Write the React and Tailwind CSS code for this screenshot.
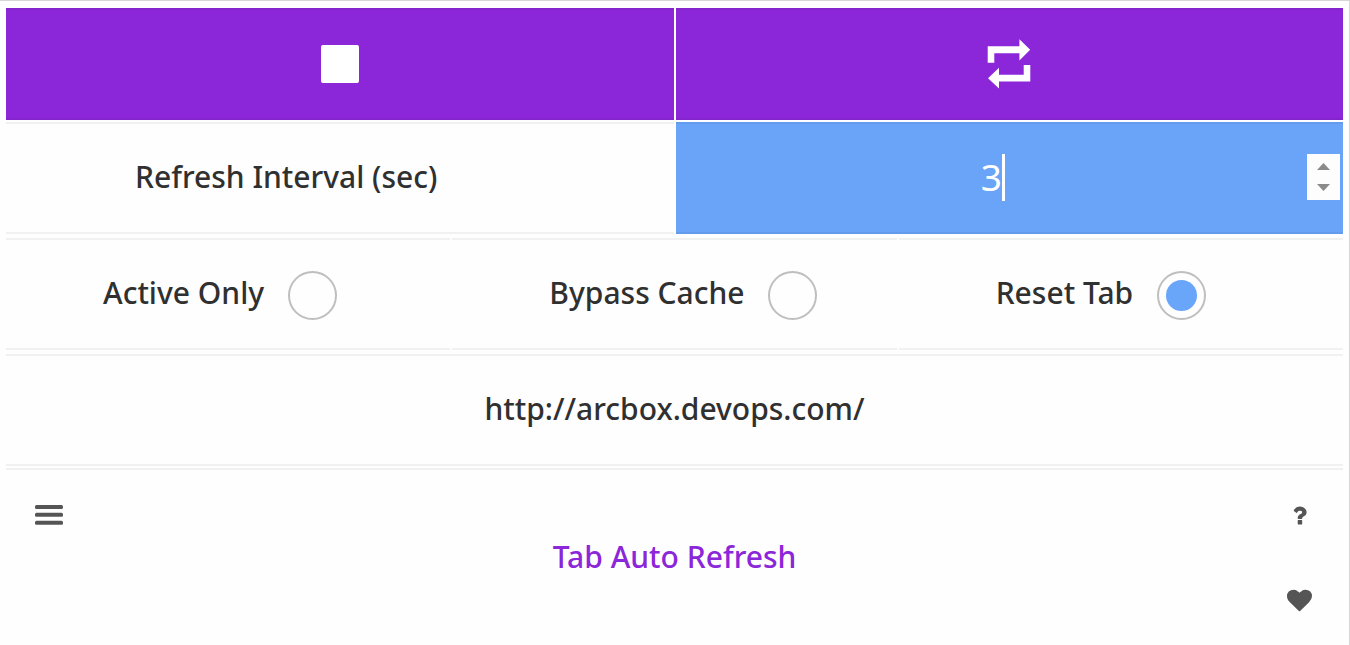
import { useState } from "react";

const cell = "min-h-28 border-y-2 border-black/5";

function Option({ id, label, checked, onChange }) {
  return (
    <div className={`${cell} flex min-w-0 flex-1 items-center gap-6 pb-0.5 pl-[97px]`}>
      <label htmlFor={id} className="whitespace-nowrap">
        {label}
      </label>
      <input
        id={id}
        type="checkbox"
        checked={checked}
        onChange={(e) => onChange(e.target.checked)}
        className="mt-1 size-[49px] shrink-0 appearance-none rounded-full border-2 border-[#bfbfbf] bg-clip-content p-[7px] checked:bg-[#69a5f8]"
      />
    </div>
  );
}

export default function App() {
  const [seconds, setSeconds] = useState(3);
  const [activeOnly, setActiveOnly] = useState(false);
  const [bypassCache, setBypassCache] = useState(false);
  const [resetTab, setResetTab] = useState(true);

  return (
    <main className="flex min-h-screen flex-col border-t border-r border-[#d6d6d6] bg-[#fefefe] px-1.5 pt-[7px] font-['Noto_Sans','Open_Sans',sans-serif] text-[30px] leading-10 font-medium text-[#303030]">
      <div className="mb-0.5 grid grid-cols-2 gap-0.5">
        <button type="button" aria-label="Stop" className={`${cell} flex items-center justify-center bg-[#8b26d9]`}>
          <svg width="38" height="38" viewBox="0 0 38 38" fill="white" aria-hidden="true">
            <rect width="38" height="38" rx="2" />
          </svg>
        </button>
        <button type="button" aria-label="Repeat" className={`${cell} flex items-center justify-center bg-[#8b26d9]`}>
          <svg width="44" height="50" viewBox="0 0 44 50" fill="white" aria-hidden="true">
            <path d="M.7 23.7V7.2h31.7V.3L43.2 10.8 32.4 21.4v-7.2H7.3v9.5z" />
            <path d="M43.3 26v16.4H12v7.2L1 39.2l11-10.5v7.1h24.7V26z" />
          </svg>
        </button>
      </div>

      <div className="mb-1 grid grid-cols-2 gap-0.5">
        <div className={`${cell} flex items-center pb-0.5 pl-[129px]`}>
          <label htmlFor="interval">Refresh Interval (sec)</label>
        </div>
        <div className={`${cell} flex items-center bg-[#6aa4f9] pr-[3px] pb-0.5 text-white`}>
          <div className="relative flex min-w-0 flex-1 items-center">
            <input
              id="interval"
              type="number"
              min="1"
              value={seconds}
              onChange={(e) => setSeconds(Number(e.target.value))}
              className="w-full [appearance:textfield] bg-transparent text-center text-[37px] leading-[46px] font-normal caret-transparent outline-none [&::-webkit-inner-spin-button]:appearance-none"
            />
            <span className="absolute left-1/2 ml-[11px] h-[47px] w-[3px] bg-white" />
          </div>
          <div className="flex h-[46px] w-[33px] flex-col bg-[#fdfdfd]">
            <button
              type="button"
              aria-label="Increase interval"
              onClick={() => setSeconds(seconds + 1)}
              className="flex flex-1 items-end justify-center pb-[7px]"
            >
              <svg width="13" height="7" viewBox="0 0 13 7" fill="#8a8a8a" aria-hidden="true">
                <path d="M6.500 0 13 7H0z" />
              </svg>
            </button>
            <button
              type="button"
              aria-label="Decrease interval"
              onClick={() => setSeconds(Math.max(1, seconds - 1))}
              className="flex flex-1 items-start justify-center pt-[7px]"
            >
              <svg width="13" height="7" viewBox="0 0 13 7" fill="#8a8a8a" aria-hidden="true">
                <path d="M0 0h13L6.500 7z" />
              </svg>
            </button>
          </div>
        </div>
      </div>

      <div className="mb-1 flex gap-0.5">
        <Option id="active" label="Active Only" checked={activeOnly} onChange={setActiveOnly} />
        <Option id="bypass" label="Bypass Cache" checked={bypassCache} onChange={setBypassCache} />
        <Option id="reset" label="Reset Tab" checked={resetTab} onChange={setResetTab} />
      </div>

      <div className={`${cell} mb-0.5 flex items-center justify-center pb-0.5`}>
        <span>http://arcbox.devops.com/</span>
      </div>

      <footer className="flex flex-1 items-start justify-between border-t-2 border-black/5 px-7 pt-8">
        <button type="button" aria-label="Menu" className="flex h-[25px] w-[30px] items-center justify-center">
          <svg width="28" height="20" viewBox="0 0 28 20" fill="#555" aria-hidden="true">
            <rect width="28" height="4" rx="1.500" />
            <rect y="7.800" width="28" height="4" rx="1.500" />
            <rect y="15.800" width="28" height="4" rx="1.500" />
          </svg>
        </button>
        <a href="#home" className="mt-[35px] text-[#8b26d9]">
          Tab Auto Refresh
        </a>
        <div className="flex w-[30px] flex-col items-center gap-[60px] pt-px">
          <button type="button" aria-label="Help">
            <svg className="block" width="25" height="25" viewBox="0 0 1792 1792" fill="#555" aria-hidden="true">
              <path d="M1088 1256v240q0 16-12 28t-28 12h-240q-16 0-28-12t-12-28v-240q0-16 12-28t28-12h240q16 0 28 12t12 28zm316-600q0 54-15.500 101t-35 76.500-55 59.500-57.500 43.500-61 35.500q-41 23-68.500 65t-27.500 67q0 17-12 32.500t-28 15.500h-240q-15 0-25.500-18.500t-10.500-37.500v-45q0-83 65-156.500t143-108.500q59-27 84-56t25-76q0-42-46.500-74t-107.500-32q-65 0-108 29-35 25-107 115-13 16-31 16-12 0-25-8l-164-125q-13-10-15.500-25t5.500-28q160-266 464-266 80 0 161 31t146 83 106 127.500 41 158.500z" />
            </svg>
          </button>
          <button type="button" aria-label="Favorite">
            <svg className="block" width="25" height="25" viewBox="0 0 1792 1792" fill="#555" aria-hidden="true">
              <path d="M896 1664q-26 0-44-18l-624-602q-10-8-27.500-26t-55.500-65.500-68-97.500-53.500-121-23.500-138q0-220 127-344t351-124q62 0 126.500 21.500t120 58 95.500 68.500 76 68q36-36 76-68t95.500-68.500 120-58 126.500-21.500q224 0 351 124t127 344q0 221-229 450l-623 600q-18 18-44 18z" />
            </svg>
          </button>
        </div>
      </footer>
    </main>
  );
}
